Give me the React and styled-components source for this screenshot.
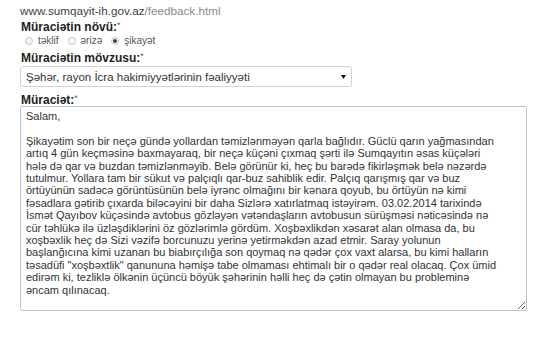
import React from "react";
import styled, { createGlobalStyle } from "styled-components";

const Global = createGlobalStyle`
  html, body { margin: 0; padding: 0; background: #fff; }
  body { font-family: "Liberation Sans", Arial, sans-serif; }
`;

const Page = styled.div`
  width: 545px;
  height: 340px;
  box-sizing: border-box;
  padding: 4px 0 0 20px;
  display: flex;
  flex-direction: column;
  overflow: hidden;
`;

const Url = styled.div`
  font-size: 11.7px;
  line-height: 14px;
  color: #3e3e3e;
  span { color: #8a8a8a; }
`;

const Label = styled.div`
  font-size: 12px;
  font-weight: bold;
  line-height: ${(p) => p.$lh || 14}px;
  color: #1e1e1e;
  margin-top: ${(p) => p.$mt || 0}px;
  padding-left: 1px;
  sup {
    font-weight: normal;
    font-size: 9px;
    color: #666;
    vertical-align: 3px;
    line-height: 0;
  }
`;

const RadioRow = styled.div`
  display: flex;
  align-items: center;
  height: 13px;
  padding-left: 5px;
  font-size: 10px;
  color: #555;
`;

const RadioItem = styled.label`
  display: flex;
  align-items: center;
  gap: 5px;
  margin-right: 9px;
`;

const Radio = styled.input.attrs({ type: "radio" })`
  appearance: none;
  margin: 0;
  width: 8px;
  height: 8px;
  border-radius: 50%;
  border: 1px solid #cacaca;
  background: radial-gradient(circle at 50% 40%, #fff 0%, #e8e8e8 100%);
  box-sizing: border-box;
  &:checked {
    background: radial-gradient(circle, #444 0 1.5px, #ececec 2.2px);
  }
`;

const SelectWrap = styled.div`
  position: relative;
  width: 332px;
  height: 21px;
  margin-top: 1px;
`;

const Select = styled.select`
  appearance: none;
  width: 100%;
  height: 100%;
  margin: 0;
  box-sizing: border-box;
  border: 1px solid #d2d2d2;
  border-radius: 3px;
  background: #fff;
  padding: 0 0 0 5px;
  font-family: "Liberation Sans", Arial, sans-serif;
  font-size: 11.5px;
  color: #333;
  outline: none;
`;

const Arrow = styled.svg`
  position: absolute;
  right: 6px;
  top: 9px;
  pointer-events: none;
`;

const TextArea = styled.textarea`
  width: 507px;
  height: 205px;
  box-sizing: border-box;
  margin: 0;
  border: 1px solid #b6c9dc;
  border-radius: 2px;
  padding: 3px 5px;
  font-family: "Liberation Sans", Arial, sans-serif;
  font-size: 11px;
  line-height: 12.4px;
  color: #333;
  white-space: pre;
  overflow: hidden;
  resize: both;
  outline: none;
  box-shadow: inset 0 0 1px rgba(100,140,180,0.25);
`;

const text = `Salam,

Şikayətim son bir neçə gündə yollardan təmizlənməyən qarla bağlıdır. Güclü qarın yağmasından
artıq 4 gün keçməsinə baxmayaraq, bir neçə küçəni çıxmaq şərti ilə Sumqayıtın əsas küçələri
hələ də qar və buzdan təmizlənməyib. Belə görünür ki, heç bu barədə fikirləşmək belə nəzərdə
tutulmur. Yollara tam bir sükut və palçıqlı qar-buz sahiblik edir. Palçıq qarışmış qar və buz
örtüyünün sadəcə görüntüsünün belə iyrənc olmağını bir kənara qoyub, bu örtüyün nə kimi
fəsadlara gətirib çıxarda biləcəyini bir daha Sizlərə xatırlatmaq istəyirəm. 03.02.2014 tarixində
İsmət Qayıbov küçəsində avtobus gözləyən vətəndaşların avtobusun sürüşməsi nəticəsində nə
cür təhlükə ilə üzləşdiklərini öz gözlərimlə gördüm. Xoşbəxlikdən xəsarət alan olmasa da, bu
xoşbəxlik heç də Sizi vəzifə borcunuzu yerinə yetirməkdən azad etmir. Saray yolunun
başlanğıcına kimi uzanan bu biabırçılığa son qoymaq nə qədər çox vaxt alarsa, bu kimi halların
təsadüfi "xoşbəxtlik" qanununa həmişə tabe olmaması ehtimalı bir o qədər real olacaq. Çox ümid
edirəm ki, tezliklə ölkənin üçüncü böyük şəhərinin həlli heç də çətin olmayan bu probleminə
əncam qılınacaq.`;

export default function App() {
  return (
    <>
      <Global />
      <Page>
        <Url>
          www.sumqayit-ih.gov.az<span>/feedback.html</span>
        </Url>
        <Label $mt={2}>
          Müraciətin növü:<sup>*</sup>
        </Label>
        <RadioRow>
          <RadioItem>
            <Radio name="nov" /> təklif
          </RadioItem>
          <RadioItem>
            <Radio name="nov" /> ərizə
          </RadioItem>
          <RadioItem>
            <Radio name="nov" defaultChecked /> şikayət
          </RadioItem>
        </RadioRow>
        <Label $mt={4}>
          Müraciətin mövzusu:<sup>*</sup>
        </Label>
        <SelectWrap>
          <Select defaultValue="1">
            <option value="1">Şəhər, rayon İcra hakimiyyətlərinin fəaliyyəti</option>
          </Select>
          <Arrow width="5" height="4" viewBox="0 0 5 4">
            <path d="M0 0 H5 L2.5 4 Z" fill="#111" />
          </Arrow>
        </SelectWrap>
        <Label $mt={7} $lh={12}>
          Müraciət:<sup>*</sup>
        </Label>
        <TextArea defaultValue={text} spellCheck={false} />
      </Page>
    </>
  );
}
